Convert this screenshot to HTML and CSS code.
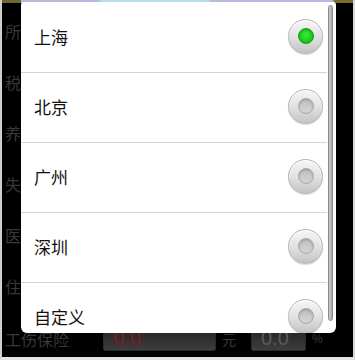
FILE: index.html
```html
<!DOCTYPE html>
<html>
<head>
<meta charset="utf-8">
<link rel="stylesheet" href="styles.css">
</head>
<body>
<div class="frame">
  <div class="topband"></div>
  <div class="form">
    <div class="frow"><span class="flabel">所</span></div>
    <div class="frow"><span class="flabel">税</span></div>
    <div class="frow"><span class="flabel">养</span></div>
    <div class="frow"><span class="flabel">失</span></div>
    <div class="frow"><span class="flabel">医</span></div>
    <div class="frow"><span class="flabel">住</span></div>
    <div class="frow last">
      <span class="flabel wide">工伤保险</span>
      <span class="field big"><span class="red">0.0</span></span>
      <span class="unit">元</span>
      <span class="field small"><span class="gray">0.0</span></span>
      <span class="unit pct">%</span>
    </div>
  </div>
  <div class="dialog">
    <div class="list">
      <div class="item"><span class="name">上海</span><span class="radio on"><span class="dot"></span></span></div>
      <div class="item"><span class="name">北京</span><span class="radio"><span class="dot"></span></span></div>
      <div class="item"><span class="name">广州</span><span class="radio"><span class="dot"></span></span></div>
      <div class="item"><span class="name">深圳</span><span class="radio"><span class="dot"></span></span></div>
      <div class="item"><span class="name">自定义</span><span class="radio"><span class="dot"></span></span></div>
    </div>
    <div class="scrollbar"></div>
  </div>
</div>
</body>
</html>
```
FILE: styles.css
```css
html, body {
  margin: 0;
  padding: 0;
  background: #000;
}
body {
  width: 355px;
  height: 360px;
  overflow: hidden;
  font-family: "Noto Sans CJK SC", "Noto Sans", sans-serif;
}
.frame {
  position: relative;
  box-sizing: border-box;
  width: 355px;
  height: 360px;
  background: #000;
  border-left: 2px solid #cfcfcf;
  border-right: 2px solid #d8d8d8;
  border-bottom: 3px solid #e4e4e4;
  overflow: hidden;
}
.topband {
  height: 3px;
  background: linear-gradient(to right, #6f6634 0, #6f6634 19px, #b9bbd9 19px, #b6b9dc 95px, #b6e0e2 100px, #b6e0e2 205px, #b8bade 210px, #b8bade 330px, #7a6b2c 333px, #7a6b2c 100%);
}
.form {
  padding-top: 2px;
  padding-left: 3px;
}
.frow {
  height: 51px;
  display: flex;
  align-items: center;
}
.frow.last {
  padding-top: 4px;
  box-sizing: border-box;
}
.flabel {
  font-size: 16px;
  color: #383838;
  line-height: 1;
}
.flabel.wide {
  width: 98px;
}
.field {
  box-sizing: border-box;
  height: 25px;
  background: linear-gradient(#222, #3d3d3d);
  border: 1px solid #2a2a2a;
  border-radius: 2px;
  display: flex;
  align-items: center;
  padding-left: 9px;
  font-family: "Liberation Sans", sans-serif;
  font-size: 20px;
}
.field.big { width: 113px; }
.field.small { width: 55px; }
.red { color: #7e1c1c; }
.gray { color: #5a5a5a; }
.unit {
  font-size: 14px;
  color: #3a3a3a;
  width: 35px;
  padding-left: 6px;
  box-sizing: border-box;
}
.unit.pct { width: auto; font-family: "Liberation Sans", sans-serif; font-size: 12px; }
.dialog {
  position: absolute;
  left: 19px;
  top: 2px;
  width: 315px;
  height: 331px;
  background: #fff;
  border-radius: 3px 3px 6px 6px;
  overflow: hidden;
}
.list {
  width: 306px;
  padding-top: 1px;
}
.item {
  box-sizing: border-box;
  height: 70px;
  padding-bottom: 3px;
  border-bottom: 1px solid #d4d4d4;
  display: flex;
  align-items: center;
  justify-content: space-between;
  padding-left: 13px;
}
.name {
  font-size: 17px;
  color: #111;
  line-height: 1;
}
.radio {
  box-sizing: border-box;
  width: 35px;
  height: 35px;
  margin-right: 4px;
  border-radius: 50%;
  border: 1px solid #b4b4b4;
  background: linear-gradient(#f6f6f6, #e2e2e2 50%, #c4c4c4);
  box-shadow: inset 0 1px 1px #fff, 0 1px 1px rgba(0,0,0,0.15);
  display: flex;
  align-items: center;
  justify-content: center;
}
.dot {
  box-sizing: border-box;
  width: 16px;
  height: 16px;
  border-radius: 50%;
  border: 1px solid #a8a8a8;
  background: linear-gradient(#bdbdbd, #d6d6d6);
  box-shadow: inset 0 1px 2px rgba(0,0,0,0.2);
}
.radio.on .dot {
  border: 1px solid #169a16;
  background: radial-gradient(circle at 50% 40%, #3ee83e, #14c814 70%, #0ea80e);
}
.scrollbar {
  position: absolute;
  right: 3px;
  top: 3px;
  width: 5px;
  height: 316px;
  box-sizing: border-box;
  border: 1px solid #8a8a8a;
  border-radius: 3px;
  background: linear-gradient(to right, #cfcfcf, #a8a8a8);
}
```
